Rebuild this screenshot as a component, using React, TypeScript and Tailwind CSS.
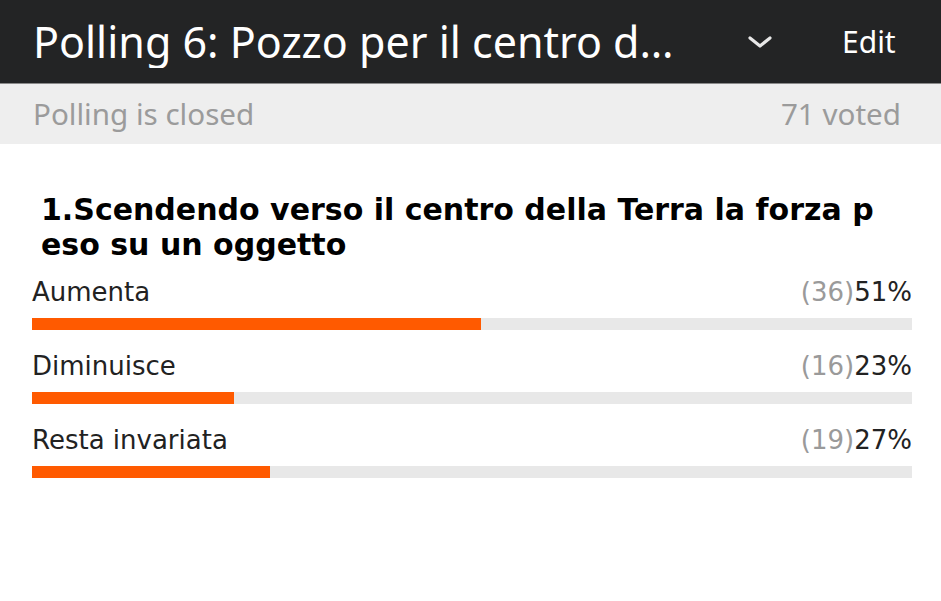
import { FC } from "react";

interface IOption {
  label: string;
  count: number;
  percent: number;
}

const options: IOption[] = [
  { label: "Aumenta", count: 36, percent: 51 },
  { label: "Diminuisce", count: 16, percent: 23 },
  { label: "Resta invariata", count: 19, percent: 27 },
];

const OptionRow: FC<IOption> = ({ label, count, percent }) => {
  return (
    <div className="flex flex-col">
      <div className="flex justify-between h-[30px] leading-[30px] text-[26px] text-[#222]">
        <span>{label}</span>
        <span>
          <span className="text-[#9a9a9a]">({count})</span>
          {percent}%
        </span>
      </div>
      <div className="mt-[11px] h-[12px] w-full bg-[#e8e8e8]">
        <div className="h-full bg-[#ff5a00]" style={{ width: `${percent}%` }} />
      </div>
    </div>
  );
};

const App: FC = () => {
  return (
    <div className="w-[941px] h-[601px] bg-white overflow-hidden">
      <div className="flex items-center h-[84px] bg-[#232425] border-b border-[#8a8a8a] pl-[33px] font-['Noto_Sans',sans-serif] text-white">
        <h1 className="w-[656px] truncate text-[43px] leading-[52px]">
          Polling 6: Pozzo per il centro della Terra
        </h1>
        <svg className="ml-[58px] w-[26px] h-[14px]" viewBox="0 0 26 14" fill="none">
          <path d="M3 3 L13 11 L23 3" stroke="#e8e8e8" strokeWidth="3.2" strokeLinecap="round" strokeLinejoin="round" />
        </svg>
        <span className="ml-[69px] text-[30px] leading-[40px]">Edit</span>
      </div>

      <div className="flex justify-between items-center h-[60px] bg-[#eeeeee] pl-[33px] pr-[40px] font-['Noto_Sans',sans-serif] text-[29.6px] text-[#9b9b9b]">
        <span>Polling is closed</span>
        <span>71 voted</span>
      </div>

      <div className="px-[32px] pt-[48px] font-['DejaVu_Sans',sans-serif]">
        <h2 className="pl-[9px] pr-[20px] text-[30px] leading-[35px] font-bold text-black break-all">
          1.Scendendo verso il centro della Terra la forza peso su un oggetto
        </h2>
        <div className="mt-[15px] flex flex-col gap-[21px] w-[880px]">
          {options.map((o) => (
            <OptionRow key={o.label} {...o} />
          ))}
        </div>
      </div>
    </div>
  );
};

export default App;
